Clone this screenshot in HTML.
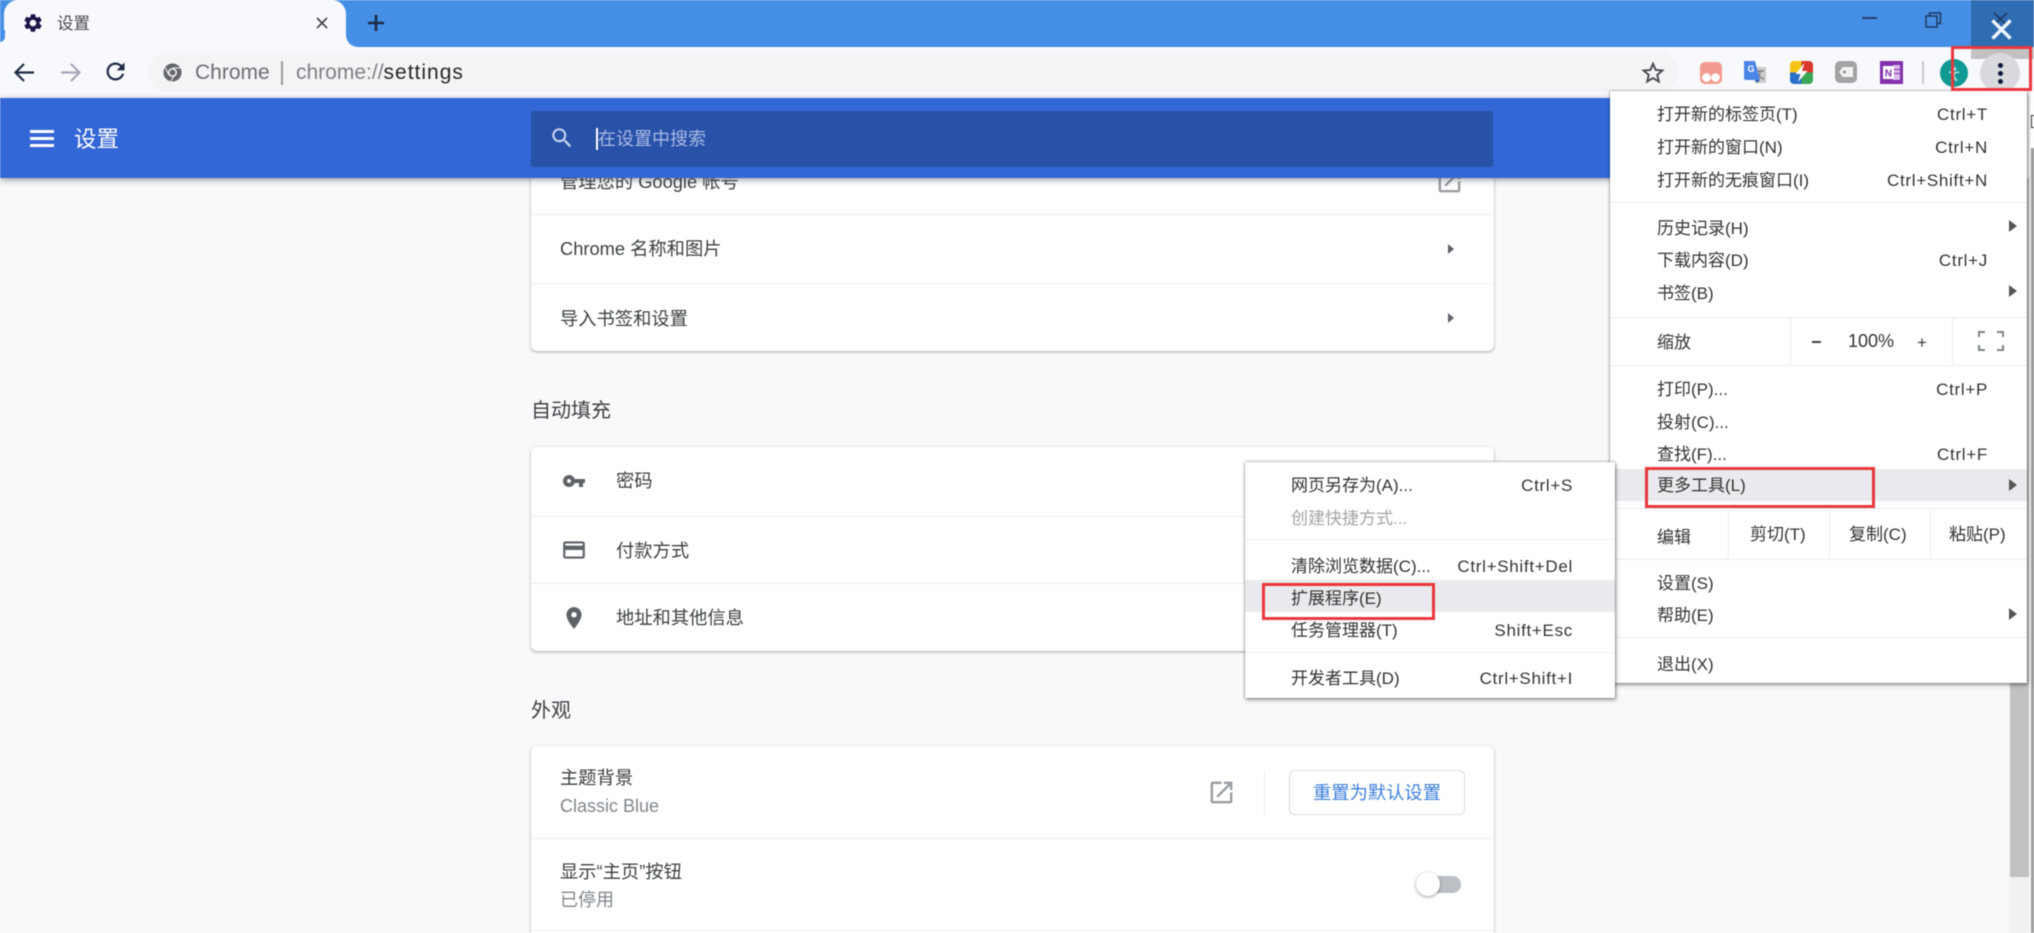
<!DOCTYPE html>
<html lang="zh-CN">
<head>
<meta charset="utf-8">
<title>设置</title>
<style>
html,body{margin:0;padding:0;width:2034px;height:933px;overflow:hidden;background:#f8f9fb;font-family:"Liberation Sans","Noto Sans CJK SC",sans-serif;color:#3c4043}
div,span,svg{position:absolute;box-sizing:border-box}
#w{left:0;top:0;width:2034px;height:933px;overflow:hidden;background:#f8f9fb;filter:blur(.4px)}
.t{white-space:nowrap;line-height:24px;height:24px}
.m{font-size:17px;color:#333;margin-top:1px}
.r{text-align:right;letter-spacing:.7px}
.s{font-size:18.3px;color:#3c4043}
.g{font-size:18px;color:#80868b}
.sep{height:1px;background:#ececec}
.rs{height:1px;background:#ededee;left:0;right:0}
.card{left:531px;width:963px;background:#fff;border-radius:6px;box-shadow:0 1px 2px rgba(60,64,67,.35),0 1px 4px rgba(60,64,67,.12)}
.red{border:3px solid #e8383d;background:transparent}
.arrow{width:0;height:0;border-left:8px solid #555;border-top:6px solid transparent;border-bottom:6px solid transparent}
.sa{width:0;height:0;border-left:6px solid #5f6368;border-top:5px solid transparent;border-bottom:5px solid transparent}
.vd{width:1px;background:#ececec}
</style>
</head>
<body>
<div id="w">

<!-- tab strip -->
<div style="left:0;top:0;width:2034px;height:47px;background:#458fe6"></div>
<div style="left:4px;top:0;width:342px;height:47px;background:#f8f9fc;border-radius:14px 14px 0 0"></div>
<div style="left:0;top:37px;width:5px;height:10px;background:#f8f9fc"></div>
<div style="left:0;top:30px;width:5px;height:12px;background:#458fe6;border-radius:0 0 5px 0"></div>
<div style="left:346px;top:35px;width:12px;height:12px;background:#f8f9fc"></div>
<div style="left:346px;top:33px;width:14px;height:14px;background:#458fe6;border-radius:0 0 0 12px"></div>

<svg style="left:22px;top:12px" width="22" height="22" viewBox="0 0 24 24"><path fill="#1c1548" d="M19.14 12.94c.04-.3.06-.61.06-.94 0-.32-.02-.64-.07-.94l2.03-1.58c.18-.14.23-.41.12-.61l-1.92-3.32c-.12-.22-.37-.29-.59-.22l-2.39.96c-.5-.38-1.03-.7-1.62-.94l-.36-2.54c-.04-.24-.24-.41-.48-.41h-3.84c-.24 0-.43.17-.47.41l-.36 2.54c-.59.24-1.13.57-1.62.94l-2.39-.96c-.22-.08-.47 0-.59.22L2.74 8.87c-.12.21-.08.47.12.61l2.03 1.58c-.05.3-.09.63-.09.94s.02.64.07.94l-2.03 1.58c-.18.14-.23.41-.12.61l1.92 3.32c.12.22.37.29.59.22l2.39-.96c.5.38 1.03.7 1.62.94l.36 2.54c.05.24.24.41.48.41h3.84c.24 0 .44-.17.47-.41l.36-2.54c.59-.24 1.13-.56 1.62-.94l2.39.96c.22.08.47 0 .59-.22l1.92-3.32c.12-.22.07-.47-.12-.61l-2.01-1.58zM12 15.6c-1.98 0-3.6-1.62-3.6-3.6s1.62-3.6 3.6-3.6 3.6 1.62 3.6 3.6-1.62 3.6-3.6 3.6z"/></svg>
<div class="t" style="left:57px;top:12px;font-size:16.5px;color:#45494e">设置</div>
<svg style="left:314px;top:15px" width="16" height="16" viewBox="0 0 16 16"><path d="M3 3l10 10M13 3L3 13" stroke="#3f4347" stroke-width="1.6" fill="none"/></svg>
<svg style="left:367px;top:14px" width="18" height="18" viewBox="0 0 18 18"><path d="M9 1v16M1 9h16" stroke="#1d2a44" stroke-width="2.6" fill="none"/></svg>

<!-- window controls -->
<div style="left:1862px;top:17px;width:15px;height:2px;background:#27406a"></div>
<svg style="left:1925px;top:12px" width="17" height="16" viewBox="0 0 17 16"><path d="M1 4h11v11H1zM4.500 4V1H15.500v10.500H12" fill="none" stroke="#1f3a63" stroke-width="1.500"/></svg>
<div style="left:1971px;top:0;width:63px;height:47px;background:#2f6db3"></div>
<svg style="left:1990px;top:12px" width="22" height="12" viewBox="0 0 22 12"><path d="M4 1l13 12M17 1L4 13" stroke="#20395f" stroke-width="1.600" fill="none"/></svg>
<svg style="left:1990px;top:18px" width="23" height="23" viewBox="0 0 23 23"><path d="M2.500 2.500l18 18M20.500 2.500l-18 18" stroke="#eef4fc" stroke-width="3.400" fill="none"/></svg>

<!-- toolbar -->
<div style="left:0;top:47px;width:2034px;height:51px;background:#f8f9fc"></div>
<div style="left:1971px;top:47px;width:63px;height:12px;background:#c2c2c2"></div>
<svg style="left:11px;top:59px" width="27" height="27" viewBox="0 0 27 27"><path fill="none" stroke="#1f2a44" stroke-width="2.200" d="M23 13.500H5M13 5l-8.500 8.500L13 22"/></svg>
<svg style="left:57px;top:59px" width="27" height="27" viewBox="0 0 27 27"><path fill="none" stroke="#a8a6b8" stroke-width="2.200" d="M4 13.500h18M14 5l8.500 8.500L14 22"/></svg>
<svg style="left:102px;top:58px" width="27" height="27" viewBox="0 0 24 24"><path fill="#1f2a44" d="M17.650 6.350C16.200 4.900 14.210 4 12 4c-4.420 0-7.990 3.580-7.990 8s3.570 8 7.990 8c3.730 0 6.840-2.550 7.730-6h-2.080c-.82 2.330-3.040 4-5.650 4-3.310 0-6-2.690-6-6s2.690-6 6-6c1.660 0 3.140.690 4.220 1.780L13 11h7V4l-2.350 2.350z"/></svg>
<div style="left:148px;top:52px;width:1530px;height:40px;border-radius:20px;background:#f3f4f6"></div>
<svg style="left:163px;top:63px" width="19" height="19" viewBox="0 0 20 20"><circle cx="10" cy="10" r="9.500" fill="#63666a"/><circle cx="10" cy="10" r="4.800" fill="#e8e9ea"/><circle cx="10" cy="10" r="3" fill="#63666a"/><path d="M10 5.200h8M6 12.500L2.500 5M12 13.500l-4 6" stroke="#e8e9ea" stroke-width="1.100"/></svg>
<div class="t" style="left:195px;top:61px;font-size:21px;color:#6b6f73">Chrome</div>
<div style="left:281px;top:61px;width:1.500px;height:24px;background:#9a9da0"></div>
<div class="t" style="left:296px;top:61px;font-size:21px;color:#7d8185">chrome://<span style="position:static;color:#24262a;letter-spacing:1px">settings</span></div>
<svg style="left:1639px;top:59px" width="28" height="28" viewBox="0 0 24 24"><path fill="#45474b" d="M22 9.240l-7.190-.62L12 2 9.190 8.630 2 9.240l5.460 4.730L5.820 21 12 17.270 18.180 21l-1.630-7.030L22 9.240zM12 15.400l-3.760 2.270 1-4.280-3.320-2.880 4.380-.38L12 6.100l1.710 4.040 4.380.38-3.320 2.880 1 4.280L12 15.400z"/></svg>

<!-- extension icons -->
<svg style="left:1700px;top:62px" width="22" height="22" viewBox="0 0 22 22"><rect width="22" height="22" rx="5" fill="#f29c8f"/><circle cx="6.500" cy="15.500" r="4.300" fill="#fff"/><circle cx="15.500" cy="15.500" r="4.300" fill="#fff"/></svg>
<svg style="left:1743px;top:60px" width="24" height="24" viewBox="0 0 24 24"><path d="M10 7h13v16H12z" fill="#ccc"/><path d="M14 11h7M17 11c0 4-2 6-4 7M15 14c1 2 3 4 6 5" stroke="#777" stroke-width="1.200" fill="none"/><path d="M1 1h11l5 19H3a2 2 0 0 1-2-2z" fill="#4a86e8"/><path d="M12 20l5 0-3 3z" fill="#2a56b0"/><text x="4.500" y="12" font-size="9" font-weight="700" fill="#fff" font-family="Liberation Sans">G</text></svg>
<svg style="left:1790px;top:61px" width="23" height="23" viewBox="0 0 23 23"><defs><clipPath id="c"><rect width="23" height="23" rx="4"/></clipPath></defs><g clip-path="url(#c)"><rect width="11.500" height="11.500" fill="#f5c518"/><rect x="11.500" width="11.500" height="11.500" fill="#d9382e"/><rect y="11.500" width="11.500" height="11.500" fill="#2a6fc9"/><rect x="11.500" y="11.500" width="11.500" height="11.500" fill="#3aa757"/></g><path d="M14.500 2L5.500 13h5l-2.500 8 9.500-11h-5.500z" fill="#fff"/></svg>
<svg style="left:1835px;top:61px" width="22" height="22" viewBox="0 0 22 22"><rect width="22" height="22" rx="5" fill="#a3a3a3"/><path d="M8 6h10v10H8l-4-5z" fill="#f2f2f2"/><circle cx="9.500" cy="11" r="1.500" fill="#8a8a8a"/></svg>
<svg style="left:1880px;top:61px" width="23" height="23" viewBox="0 0 23 23"><rect width="23" height="23" fill="#8230ab"/><rect x="13" y="4" width="7" height="15" fill="#d9b8ea"/><rect x="13" y="8" width="7" height="1" fill="#8230ab"/><rect x="13" y="12" width="7" height="1" fill="#8230ab"/><rect x="3" y="5" width="11" height="13" fill="#fff"/><text x="4.700" y="15.500" font-size="10" font-weight="700" fill="#8230ab" font-family="Liberation Sans">N</text></svg>
<div style="left:1922px;top:61px;width:1.500px;height:23px;background:#c8cbce"></div>
<svg style="left:1940px;top:59px" width="28" height="28" viewBox="0 0 28 28"><circle cx="14" cy="14" r="14" fill="#109a93"/><circle cx="14" cy="10" r="2.200" fill="#bfe7e4"/><path d="M9 13l5 1 5-1M14 14v4M14 18l-3 4M14 18l3 4" stroke="#bfe7e4" stroke-width="1.600" fill="none"/></svg>
<div style="left:1980px;top:53px;width:40px;height:40px;border-radius:50%;background:#d8dade"></div>
<div style="left:1997.500px;top:63px;width:5px;height:5px;border-radius:50%;background:#10183a"></div>
<div style="left:1997.500px;top:71px;width:5px;height:5px;border-radius:50%;background:#10183a"></div>
<div style="left:1997.500px;top:79px;width:5px;height:5px;border-radius:50%;background:#10183a"></div>

<!-- page content -->
<div class="card" style="top:140px;height:211px">
  <div class="rs" style="top:74px"></div>
  <div class="rs" style="top:143px"></div>
  <div class="t s" style="left:29px;top:30px">管理您的 Google 帐号</div>
  <svg style="left:904px;top:27px" width="29" height="29" viewBox="0 0 24 24"><path fill="#9a9da1" d="M19 19H5V5h7V3H5c-1.110 0-2 .9-2 2v14c0 1.100.89 2 2 2h14c1.100 0 2-.9 2-2v-7h-2v7zM14 3v2h3.590l-9.830 9.830 1.410 1.410L19 6.410V10h2V3h-7z"/></svg>
  <div class="t s" style="left:29px;top:97px">Chrome 名称和图片</div>
  <div class="sa" style="left:917px;top:104px"></div>
  <div class="t s" style="left:29px;top:167px">导入书签和设置</div>
  <div class="sa" style="left:917px;top:173px"></div>
</div>

<div class="t" style="left:531px;top:399px;font-size:20px;color:#3c4043">自动填充</div>
<div class="card" style="top:447px;height:204px">
  <div class="rs" style="top:69px"></div>
  <div class="rs" style="top:136px"></div>
  <svg style="left:31px;top:22px" width="24" height="24" viewBox="0 0 24 24"><path fill="#5f6368" d="M12.650 10C11.830 7.670 9.610 6 7 6c-3.310 0-6 2.690-6 6s2.690 6 6 6c2.610 0 4.830-1.670 5.650-4H17v4h4v-4h2v-4H12.650zM7 14c-1.100 0-2-.9-2-2s.9-2 2-2 2 .9 2 2-.9 2-2 2z"/></svg>
  <div class="t s" style="left:85px;top:22px">密码</div>
  <svg style="left:30px;top:90px" width="26" height="26" viewBox="0 0 24 24"><path fill="#5f6368" d="M20 4H4c-1.110 0-1.990.89-1.990 2L2 18c0 1.110.89 2 2 2h16c1.110 0 2-.89 2-2V6c0-1.110-.89-2-2-2zm0 14H4v-6h16v6zm0-10H4V6h16v2z"/></svg>
  <div class="t s" style="left:85px;top:92px">付款方式</div>
  <svg style="left:30px;top:158px" width="26" height="26" viewBox="0 0 24 24"><path fill="#5f6368" d="M12 2C8.130 2 5 5.130 5 9c0 5.250 7 13 7 13s7-7.750 7-13c0-3.870-3.130-7-7-7zm0 9.500a2.500 2.500 0 1 1 0-5 2.500 2.500 0 0 1 0 5z"/></svg>
  <div class="t s" style="left:85px;top:159px">地址和其他信息</div>
</div>

<div class="t" style="left:531px;top:699px;font-size:20px;color:#3c4043">外观</div>
<div class="card" style="top:746px;height:187px;border-radius:6px 6px 0 0">
  <div class="rs" style="top:92px"></div>
  <div class="rs" style="top:184px"></div>
  <div class="t s" style="left:29px;top:20px">主题背景</div>
  <div class="t g" style="left:29px;top:48px">Classic Blue</div>
  <svg style="left:676px;top:32px" width="29" height="29" viewBox="0 0 24 24"><path fill="#9a9da1" d="M19 19H5V5h7V3H5c-1.110 0-2 .9-2 2v14c0 1.100.89 2 2 2h14c1.100 0 2-.9 2-2v-7h-2v7zM14 3v2h3.590l-9.830 9.830 1.410 1.410L19 6.410V10h2V3h-7z"/></svg>
  <div class="vd" style="left:733px;top:24px;height:45px"></div>
  <div class="t" style="left:758px;top:24px;width:176px;height:45px;line-height:43px;text-align:center;border:1.500px solid #d9dce0;border-radius:6px;font-size:18.3px;color:#3f7fdc;background:#fff">重置为默认设置</div>
  <div class="t s" style="left:29px;top:114px">显示“主页”按钮</div>
  <div class="t g" style="left:29px;top:142px">已停用</div>
  <div style="left:889px;top:130px;width:41px;height:17px;border-radius:9px;background:#bcbfc3"></div>
  <div style="left:885px;top:126px;width:24px;height:24px;border-radius:50%;background:#fff;box-shadow:0 1px 3px rgba(0,0,0,.4)"></div>
</div>

<!-- header -->
<div style="left:0;top:98px;width:2034px;height:80px;background:#3366d6;box-shadow:0 2px 6px rgba(60,64,67,.5)"></div>
<div style="left:30px;top:130px;width:24px;height:3px;background:#fff"></div>
<div style="left:30px;top:137px;width:24px;height:3px;background:#fff"></div>
<div style="left:30px;top:144px;width:24px;height:3px;background:#fff"></div>
<div class="t" style="left:74px;top:128px;font-size:22.500px;color:#fff">设置</div>
<div style="left:531px;top:111px;width:962px;height:56px;background:#2851a8;border-radius:2px"></div>
<svg style="left:549px;top:125px" width="26" height="26" viewBox="0 0 24 24"><path fill="#c6d3f0" d="M15.500 14h-.79l-.28-.27C15.410 12.590 16 11.110 16 9.500 16 5.910 13.090 3 9.500 3S3 5.910 3 9.500 5.910 16 9.500 16c1.610 0 3.090-.59 4.230-1.570l.27.28v.79l5 4.990L20.490 19l-4.990-5zm-6 0C7.010 14 5 11.990 5 9.500S7.010 5 9.500 5 14 7.010 14 9.500 11.990 14 9.500 14z"/></svg>
<div style="left:596px;top:128px;width:2px;height:22px;background:#fff"></div>
<div class="t" style="left:598px;top:127px;font-size:18px;color:#a9bbe6">在设置中搜索</div>

<!-- right scrollbar and edge -->
<div style="left:2009px;top:98px;width:21px;height:835px;background:#f1f1f1"></div>
<div style="left:2010px;top:178px;width:19px;height:699px;background:#c1c1c1"></div>
<div style="left:2030px;top:91px;width:4px;height:57px;background:#fff"></div>
<div style="left:2030px;top:148px;width:1px;height:785px;background:#fff"></div>
<div style="left:2031px;top:148px;width:3px;height:785px;background:#9b9b9b"></div>
<div style="left:2031px;top:115px;width:3px;height:13px;border:1px solid #333;border-right:0"></div>

<!-- main menu -->
<div style="left:1610px;top:91px;width:417px;height:592px;background:#fff;box-shadow:0 0 2px rgba(0,0,0,.55),1px 2px 4px rgba(0,0,0,.35)">
  <div class="sep" style="left:0;right:0;top:111px"></div>
  <div class="sep" style="left:0;right:0;top:226px"></div>
  <div class="sep" style="left:0;right:0;top:274px"></div>
  <div class="sep" style="left:0;right:0;top:417px"></div>
  <div class="sep" style="left:0;right:0;top:468px"></div>
  <div class="sep" style="left:0;right:0;top:546px"></div>
  <div style="left:0;right:0;top:378px;height:32px;background:#e9eaed"></div>
  <div class="vd" style="left:180px;top:226px;height:48px"></div>
  <div class="vd" style="left:342px;top:226px;height:48px"></div>
  <div class="vd" style="left:118px;top:417px;height:51px"></div>
  <div class="vd" style="left:219px;top:417px;height:51px"></div>
  <div class="vd" style="left:320px;top:417px;height:51px"></div>
</div>
<div class="t m" style="left:1657px;top:102px">打开新的标签页(T)</div>
<div class="t m r" style="right:46px;top:102px">Ctrl+T</div>
<div class="t m" style="left:1657px;top:135px">打开新的窗口(N)</div>
<div class="t m r" style="right:46px;top:135px">Ctrl+N</div>
<div class="t m" style="left:1657px;top:168px">打开新的无痕窗口(I)</div>
<div class="t m r" style="right:46px;top:168px">Ctrl+Shift+N</div>
<div class="t m" style="left:1657px;top:216px">历史记录(H)</div>
<div class="arrow" style="left:2009px;top:220px"></div>
<div class="t m" style="left:1657px;top:248px">下载内容(D)</div>
<div class="t m r" style="right:46px;top:248px">Ctrl+J</div>
<div class="t m" style="left:1657px;top:281px">书签(B)</div>
<div class="arrow" style="left:2009px;top:285px"></div>
<div class="t m" style="left:1657px;top:330px">缩放</div>
<div style="left:1812px;top:341px;width:9px;height:2px;background:#444"></div>
<div class="t m" style="left:1848px;top:328px;font-size:18px">100%</div>
<div class="t m" style="left:1917px;top:330px;font-size:17px">+</div>
<svg style="left:1978px;top:331px" width="26" height="20" viewBox="0 0 26 20"><path d="M1 6V1h6M19 1h6v5M25 14v5h-6M7 19H1v-5" fill="none" stroke="#808488" stroke-width="2"/></svg>
<div class="t m" style="left:1657px;top:377px">打印(P)...</div>
<div class="t m r" style="right:46px;top:377px">Ctrl+P</div>
<div class="t m" style="left:1657px;top:410px">投射(C)...</div>
<div class="t m" style="left:1657px;top:442px">查找(F)...</div>
<div class="t m r" style="right:46px;top:442px">Ctrl+F</div>
<div class="t m" style="left:1657px;top:473px">更多工具(L)</div>
<div class="arrow" style="left:2009px;top:479px"></div>
<div class="t m" style="left:1657px;top:525px">编辑</div>
<div class="t m" style="left:1750px;top:522px">剪切(T)</div>
<div class="t m" style="left:1849px;top:522px">复制(C)</div>
<div class="t m" style="left:1949px;top:522px">粘贴(P)</div>
<div class="t m" style="left:1657px;top:571px">设置(S)</div>
<div class="t m" style="left:1657px;top:603px">帮助(E)</div>
<div class="arrow" style="left:2009px;top:608px"></div>
<div class="t m" style="left:1657px;top:652px">退出(X)</div>

<!-- submenu -->
<div style="left:1245px;top:462px;width:370px;height:236px;background:#fff;box-shadow:0 0 2px rgba(0,0,0,.55),1px 2px 4px rgba(0,0,0,.35)">
  <div class="sep" style="left:0;right:0;top:77px"></div>
  <div class="sep" style="left:0;right:0;top:190px"></div>
  <div style="left:0;right:0;top:118px;height:32px;background:#e9eaed"></div>
</div>
<div class="t m" style="left:1291px;top:473px">网页另存为(A)...</div>
<div class="t m r" style="right:461px;top:473px">Ctrl+S</div>
<div class="t m" style="left:1291px;top:506px;color:#a2a4a6">创建快捷方式...</div>
<div class="t m" style="left:1291px;top:554px">清除浏览数据(C)...</div>
<div class="t m r" style="right:461px;top:554px">Ctrl+Shift+Del</div>
<div class="t m" style="left:1291px;top:586px">扩展程序(E)</div>
<div class="t m" style="left:1291px;top:618px">任务管理器(T)</div>
<div class="t m r" style="right:461px;top:618px">Shift+Esc</div>
<div class="t m" style="left:1291px;top:666px">开发者工具(D)</div>
<div class="t m r" style="right:461px;top:666px">Ctrl+Shift+I</div>

<!-- red annotation boxes -->
<div class="red" style="left:1951px;top:46px;width:81px;height:45px"></div>
<div class="red" style="left:1645px;top:467px;width:230px;height:41px"></div>
<div class="red" style="left:1262px;top:583px;width:173px;height:37px"></div>

</div>
</body>
</html>
